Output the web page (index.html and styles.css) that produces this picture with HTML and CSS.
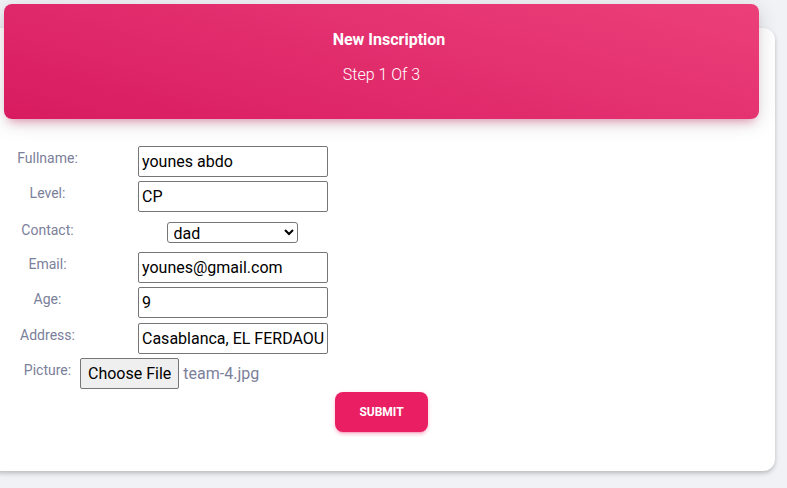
FILE: index.html
```html
<!DOCTYPE html>
<html>
<head>
<meta charset="utf-8">
<link rel="stylesheet" href="styles.css">
</head>
<body>
<div class="card">
  <div class="card-header">
    <h6 class="title">New Inscription</h6>
    <p class="step">Step 1 Of 3</p>
  </div>
  <form class="form">
    <div class="grid">
      <label class="lbl">Fullname:</label>
      <input class="field" type="text" value="younes abdo">
      <label class="lbl">Level:</label>
      <input class="field" type="text" value="CP">
      <label class="lbl lbl-contact">Contact:</label>
      <select class="sel"><option>dad</option><option>mom</option></select>
      <label class="lbl">Email:</label>
      <input class="field" type="text" value="younes@gmail.com">
      <label class="lbl">Age:</label>
      <input class="field" type="text" value="9">
      <label class="lbl">Address:</label>
      <input class="field" type="text" value="Casablanca, EL FERDAOUS">
      <label class="lbl">Picture:</label>
      <div class="file">
        <span class="file-btn">Choose File</span><span class="file-name">team-4.jpg</span>
      </div>
    </div>
    <button type="button" class="submit">Submit</button>
  </form>
</div>
</body>
</html>
```
FILE: styles.css
```css
html, body {
  margin: 0;
  padding: 0;
}
body {
  background: #f0f2f5;
  font-family: Roboto, "Liberation Sans", sans-serif;
  overflow: hidden;
  height: 488px;
}
.card {
  margin-top: 28px;
  margin-left: -12px;
  width: 787px;
  height: 443px;
  background: #fff;
  border-radius: 12px;
  box-shadow: 0 2px 4px rgba(0, 0, 0, 0.18), 0 4px 8px -2px rgba(0, 0, 0, 0.08);
  display: flex;
  flex-direction: column;
}
.card-header {
  margin: -24px 16px 0;
  height: 115px;
  box-sizing: border-box;
  padding-top: 26px;
  border-radius: 8px;
  background: linear-gradient(195deg, #ec407a, #d81b60);
  box-shadow: 0 4px 20px 0 rgba(0, 0, 0, 0.14), 0 7px 10px -5px rgba(233, 30, 99, 0.4);
  color: #fff;
  text-align: center;
}
.title {
  margin: 0;
  font-size: 16px;
  font-weight: 700;
  line-height: 20px;
  padding-left: 15px;
}
.step {
  margin: 15px 0 0;
  font-size: 16px;
  font-weight: 300;
  line-height: 20px;
}
.form {
  margin: 27px 0 0;
  display: flex;
  flex-direction: column;
}
.grid {
  margin-left: 28px;
  display: grid;
  grid-template-columns: 63px 308px;
  grid-template-rows: 35px 35px 36px 35px 36px 35px 32px;
  justify-items: center;
  align-items: start;
}
.lbl {
  font-size: 14px;
  line-height: 21px;
  color: #7b809a;
  margin-top: 2px;
  white-space: nowrap;
}
.lbl-contact {
  margin-top: 4px;
}
.field {
  box-sizing: border-box;
  width: 190px;
  height: 31px;
  margin: 0;
  padding: 1px 3px;
  border: 1px solid #767676;
  border-radius: 2px;
  font-family: Roboto, "Liberation Sans", sans-serif;
  font-size: 16px;
  color: #000;
  background: #fff;
}
.sel {
  box-sizing: border-box;
  width: 131px;
  height: 21px;
  margin: 6px 2px 0 0;
  padding: 0 0 0 2px;
  border: 1px solid #767676;
  border-radius: 3px;
  font-family: Roboto, "Liberation Sans", sans-serif;
  font-size: 16px;
  color: #000;
  background: #fff;
}
.file {
  width: 306px;
  display: flex;
  align-items: center;
  font-size: 16px;
  color: #7b809a;
}
.file-btn {
  box-sizing: border-box;
  height: 31px;
  padding: 0 7px;
  display: flex;
  align-items: center;
  border: 1px solid #767676;
  border-radius: 2px;
  background: #efefef;
  color: #000;
  margin-right: 4px;
}
.submit {
  align-self: center;
  margin-top: 2px;
  width: 93px;
  height: 40px;
  border: none;
  border-radius: 8px;
  background: #e91e63;
  color: #fff;
  font-family: Roboto, "Liberation Sans", sans-serif;
  font-size: 12px;
  font-weight: 700;
  text-transform: uppercase;
  box-shadow: 0 3px 3px 0 rgba(233, 30, 99, 0.15), 0 3px 1px -2px rgba(233, 30, 99, 0.2), 0 1px 5px 0 rgba(233, 30, 99, 0.15);
}
```
